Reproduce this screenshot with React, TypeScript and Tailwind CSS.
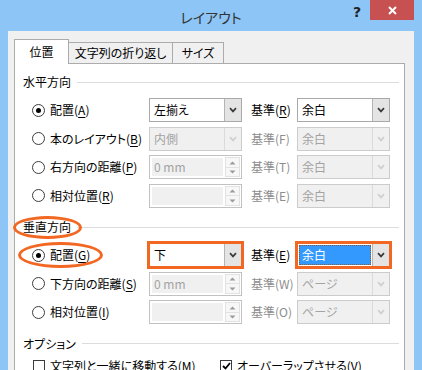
import React from "react";

type Variant = "enabled" | "disabled" | "highlight";

const Chevron = ({ color }: { color: string }) => (
  <svg width="8" height="6" viewBox="0 0 8 6">
    <path d="M1 1.2 L4 4.4 L7 1.2" fill="none" stroke={color} strokeWidth="1.7" />
  </svg>
);

function Key({ k }: { k: string }) {
  return (
    <>
      (<span className="underline underline-offset-2 decoration-1">{k}</span>)
    </>
  );
}

function Radio({ checked }: { checked?: boolean }) {
  return (
    <span className="w-[13px] h-[13px] rounded-full border border-[#3c3c3c] bg-white flex items-center justify-center shrink-0">
      {checked && <span className="w-[5px] h-[5px] rounded-full bg-black" />}
    </span>
  );
}

function Select({ value, variant, ring }: { value: string; variant: Variant; ring?: boolean }) {
  const disabled = variant === "disabled";
  return (
    <div className="relative w-[93px] h-[24px] shrink-0">
      <div
        className={
          "w-full h-full flex border " +
          (disabled ? "border-[#cccccc] bg-[#f0f0f0]" : "border-[#a9a9a9] bg-white")
        }
      >
        {variant === "highlight" ? (
          <div className="flex-1 m-[1px] flex">
            <div className="flex-1 bg-[#3399ff] border border-dotted border-[#8a5a2a] text-white pl-[2px] flex items-center">
              {value}
            </div>
          </div>
        ) : (
          <div className={"flex-1 pl-[4px] flex items-center " + (disabled ? "text-[#a3a3a3]" : "text-black")}>
            {value}
          </div>
        )}
        <div
          className={
            "w-[17px] flex items-center justify-center border-l " +
            (disabled ? "border-[#dadada] bg-[#f0f0f0]" : "border-[#b4b4b4] bg-[#e4e4e4]")
          }
        >
          <Chevron color={disabled ? "#cfcfcf" : "#3a3a3a"} />
        </div>
      </div>
      {ring && <div className="absolute -inset-[2px] border-[3px] border-[#f26722]" />}
    </div>
  );
}

function Spin({ value }: { value: string }) {
  return (
    <div className="w-[93px] h-[24px] shrink-0 flex border border-[#c2c2c2] bg-white">
      <div className="flex-1 m-[2px] bg-[#f0f0f0] pl-[2px] flex items-center text-[#a3a3a3]">{value}</div>
      <div className="w-[15px] flex flex-col my-px mr-px">
        <div className="flex-1 flex items-center justify-center border border-[#e2e2e2] bg-[#f7f7f7]">
          <svg width="7" height="4" viewBox="0 0 7 4">
            <path d="M0.5 3.5 L3.5 0.5 L6.5 3.5Z" fill="#9a9a9a" />
          </svg>
        </div>
        <div className="flex-1 flex items-center justify-center border border-t-0 border-[#e2e2e2] bg-[#f7f7f7]">
          <svg width="7" height="4" viewBox="0 0 7 4">
            <path d="M0.5 0.5 L3.5 3.5 L6.5 0.5Z" fill="#9a9a9a" />
          </svg>
        </div>
      </div>
    </div>
  );
}

function Header({ text }: { text: string }) {
  return (
    <div className="h-[20px] flex items-center">
      <span className="text-black">{text}</span>
      <div className="flex-1 h-px bg-[#dcdcdc] ml-[6px]" />
    </div>
  );
}

function Row({
  checked,
  label,
  control,
  base,
  baseEnabled,
  right,
}: {
  checked?: boolean;
  label: React.ReactNode;
  control: React.ReactNode;
  base: React.ReactNode;
  baseEnabled?: boolean;
  right: React.ReactNode;
}) {
  return (
    <div className="h-[28.5px] flex items-center pl-[9px]">
      <div className="w-[117px] flex items-center gap-[5px] text-black">
        <Radio checked={checked} />
        <span className="whitespace-nowrap">{label}</span>
      </div>
      {control}
      <div className={"w-[55px] pl-[9px] whitespace-nowrap " + (baseEnabled ? "text-black" : "text-[#8d8d8d]")}>
        {base}
      </div>
      {right}
    </div>
  );
}

export default function App() {
  return (
    <div className="relative w-[422px] h-[370px] overflow-hidden bg-[#8cc5f6] flex flex-col text-[12px] leading-none font-['Noto_Sans_CJK_JP','Noto_Sans',sans-serif] [font-feature-settings:'palt']">
      {/* title bar */}
      <div className="h-[31px] shrink-0 grid grid-cols-[1fr_auto_1fr]">
        <div />
        <div className="pt-[2px] flex items-center text-[14px] text-[#333333]">レイアウト</div>
        <div className="flex justify-end items-start">
          <span className="mt-[5px] mr-[9px] text-[14px] font-bold text-[#222] font-['DejaVu_Sans',sans-serif]">?</span>
          <div className="w-[44px] h-[20px] mr-[8px] bg-[#c75050] flex items-center justify-center">
            <svg width="9" height="9" viewBox="0 0 9 9">
              <path d="M1 1 L8 8 M8 1 L1 8" stroke="#fff" strokeWidth="2" />
            </svg>
          </div>
        </div>
      </div>

      {/* dialog body */}
      <div className="flex-1 mx-[8px] bg-[#f0f0f0] pt-[8px] pl-[6px] pr-[9px] flex flex-col">
        <div className="h-[25px] shrink-0 flex items-start">
          <div className="relative z-10 w-[55px] h-[25px] bg-white border border-b-0 border-[#acacac] flex items-center justify-center text-black">
            位置
          </div>
          <div className="mt-[3px] w-[104px] h-[22px] border border-l-0 border-[#acacac] bg-[#f0f0f0] flex items-center justify-center pb-[1px] text-black">
            文字列の折り返し
          </div>
          <div className="mt-[3px] w-[51px] h-[22px] border border-l-0 border-[#acacac] bg-[#f0f0f0] flex items-center justify-center pb-[1px] text-black">
            サイズ
          </div>
        </div>

        <div className="flex-1 -mt-px bg-white border border-[#acacac] pl-[8px] pr-[5px] pt-[8px] flex flex-col">
          <Header text="水平方向" />
          <div className="mt-[4px] flex flex-col">
            <Row
              checked
              label={<>配置<Key k="A" /></>}
              control={<Select value="左揃え" variant="enabled" />}
              base={<>基準<Key k="R" /></>}
              baseEnabled
              right={<Select value="余白" variant="enabled" />}
            />
            <Row
              label={<>本のレイアウト<Key k="B" /></>}
              control={<Select value="内側" variant="disabled" />}
              base="基準(F)"
              right={<Select value="余白" variant="disabled" />}
            />
            <Row
              label={<>右方向の距離<Key k="P" /></>}
              control={<Spin value="0 mm" />}
              base="基準(T)"
              right={<Select value="余白" variant="disabled" />}
            />
            <Row
              label={<>相対位置<Key k="R" /></>}
              control={<Spin value="" />}
              base="基準(E)"
              right={<Select value="余白" variant="disabled" />}
            />
          </div>

          <div className="mt-[7px]">
            <Header text="垂直方向" />
          </div>
          <div className="mt-[4px] flex flex-col">
            <Row
              checked
              label={<>配置<Key k="G" /></>}
              control={<Select value="下" variant="enabled" ring />}
              base={<>基準<Key k="E" /></>}
              baseEnabled
              right={<Select value="余白" variant="highlight" ring />}
            />
            <Row
              label={<>下方向の距離<Key k="S" /></>}
              control={<Spin value="0 mm" />}
              base="基準(W)"
              right={<Select value="ページ" variant="disabled" />}
            />
            <Row
              label={<>相対位置<Key k="I" /></>}
              control={<Spin value="" />}
              base="基準(O)"
              right={<Select value="ページ" variant="disabled" />}
            />
          </div>

          <div className="mt-[7px]">
            <Header text="オプション" />
          </div>
          <div className="h-[24px] flex items-center pl-[10px] text-black">
            <div className="w-[187px] flex items-center gap-[5px]">
              <span className="w-[12px] h-[12px] border border-[#3c3c3c] bg-white shrink-0" />
              <span className="whitespace-nowrap">文字列と一緒に移動する(M)</span>
            </div>
            <div className="flex items-center gap-[5px]">
              <span className="w-[12px] h-[12px] border border-[#3c3c3c] bg-white shrink-0 flex items-center justify-center">
                <svg width="9" height="8" viewBox="0 0 9 8">
                  <path d="M1 4 L3.5 6.5 L8 1" fill="none" stroke="#000" strokeWidth="1.8" />
                </svg>
              </span>
              <span className="whitespace-nowrap">オーバーラップさせる(V)</span>
            </div>
          </div>
        </div>
      </div>

      {/* annotation ellipses */}
      <div className="absolute left-[13px] top-[216px] w-[69px] h-[23px] rounded-[50%] border-[3px] border-[#f26722]" />
      <div className="absolute left-[18px] top-[242px] w-[85px] h-[26px] rounded-[50%] border-[3px] border-[#f26722]" />
    </div>
  );
}
